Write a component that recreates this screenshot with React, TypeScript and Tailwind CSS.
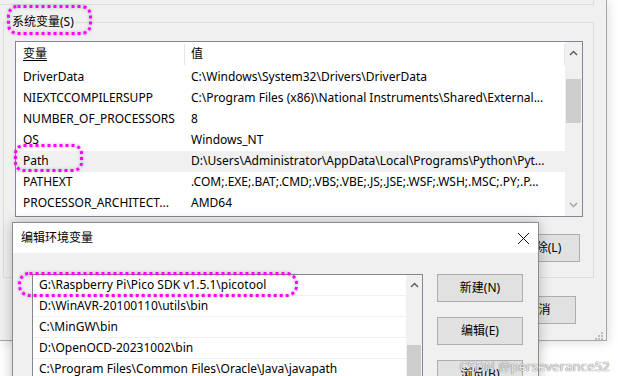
import React from "react";

const FONT = '"Noto Sans", "Noto Sans CJK SC", sans-serif';

const SYS_VARS = [
  { name: "DriverData", value: "C:\\Windows\\System32\\Drivers\\DriverData" },
  { name: "NIEXTCCOMPILERSUPP", value: "C:\\Program Files (x86)\\National Instruments\\Shared\\External..." },
  { name: "NUMBER_OF_PROCESSORS", value: "8" },
  { name: "OS", value: "Windows_NT" },
  { name: "Path", value: "D:\\Users\\Administrator\\AppData\\Local\\Programs\\Python\\Pyt...", hot: true },
  { name: "PATHEXT", value: ".COM;.EXE;.BAT;.CMD;.VBS;.VBE;.JS;.JSE;.WSF;.WSH;.MSC;.PY;.P..." },
  { name: "PROCESSOR_ARCHITECT...", value: "AMD64" },
];

const PATH_ITEMS = [
  "G:\\Raspberry Pi\\Pico SDK v1.5.1\\picotool",
  "D:\\WinAVR-20100110\\utils\\bin",
  "C:\\MinGW\\bin",
  "D:\\OpenOCD-20231002\\bin",
  "C:\\Program Files\\Common Files\\Oracle\\Java\\javapath",
];

function Chevron({ up, color }: { up?: boolean; color: string }) {
  return (
    <svg width="9" height="6" viewBox="0 0 9 6">
      <polyline
        points={up ? "1,5 4.5,1.5 8,5" : "1,1 4.5,4.5 8,1"}
        fill="none"
        stroke={color}
        strokeWidth="1.5"
      />
    </svg>
  );
}

function WinButton({ label, className = "" }: { label: string; className?: string }) {
  return (
    <div
      className={`flex items-center justify-center border border-[#adadad] bg-[#e1e1e1] text-[12px] text-black ${className}`}
    >
      {label}
    </div>
  );
}

function SystemVarList() {
  return (
    <div className="ml-[11px] mt-[18px] flex h-[176px] w-[568px] border border-[#828790] bg-white">
      <div className="flex flex-1 flex-col overflow-hidden">
        {/* header */}
        <div className="flex h-[25px] shrink-0 items-center">
          <div className="flex h-full w-[168px] items-center pl-[7px] underline underline-offset-2">变量</div>
          <div className="h-[21px] w-px bg-[#e5e5e5]" />
          <div className="flex h-full flex-1 items-center pl-[6px]">值</div>
          <div className="h-[21px] w-px bg-[#e5e5e5]" />
        </div>
        {SYS_VARS.map((v) => (
          <div
            key={v.name}
            className={`flex h-[21px] shrink-0 items-center whitespace-nowrap ${v.hot ? "bg-[#f0f0f0]" : ""}`}
          >
            <div className="w-[169px] overflow-hidden pl-[7px]">{v.name}</div>
            <div className="flex-1 overflow-hidden pl-[6px]">{v.value}</div>
          </div>
        ))}
      </div>
      {/* scrollbar */}
      <div className="flex w-[17px] flex-col bg-[#f0f0f0]">
        <div className="flex h-[20px] items-center justify-center pt-[2px]">
          <Chevron up color="#606060" />
        </div>
        <div className="h-[17px]" />
        <div className="mx-[1px] h-[44px] bg-[#cdcdcd]" />
        <div className="flex-1" />
        <div className="flex h-[20px] items-center justify-center pb-[2px]">
          <Chevron color="#a3a3a3" />
        </div>
      </div>
    </div>
  );
}

function EditDialog() {
  return (
    <div className="absolute left-[12px] top-[222px] flex h-[170px] w-[527px] flex-col border border-[#8c8c8c] bg-[#f0f0f0] shadow-[0_0_12px_rgba(0,0,0,0.25)]">
      <div className="flex h-[30px] shrink-0 items-center justify-between bg-white pl-[8px] pr-[8px]">
        <span>编辑环境变量</span>
        <svg width="13" height="13" viewBox="0 0 13 13">
          <path d="M1 1 L12 12 M12 1 L1 12" stroke="#111" strokeWidth="1" />
        </svg>
      </div>
      <div className="flex pl-[19px] pt-[21px]">
        {/* list */}
        <div className="flex h-[120px] w-[391px] border border-[#828790] bg-white">
          <div className="flex flex-1 flex-col">
            {PATH_ITEMS.map((p) => (
              <div
                key={p}
                className="flex h-[21px] shrink-0 items-center whitespace-nowrap border-b border-[#f0f0f0] pl-[6px]"
              >
                {p}
              </div>
            ))}
          </div>
          <div className="flex w-[16px] flex-col bg-[#f0f0f0]">
            <div className="flex h-[18px] items-center justify-center pt-[2px]">
              <Chevron up color="#606060" />
            </div>
            <div className="h-[52px]" />
            <div className="mx-[1px] flex-1 bg-[#cdcdcd]" />
          </div>
        </div>
        {/* buttons */}
        <div className="ml-[14px] flex flex-col gap-[15px]">
          <WinButton label="新建(N)" className="h-[28px] w-[86px]" />
          <WinButton label="编辑(E)" className="h-[28px] w-[86px]" />
          <WinButton label="浏览(B)" className="h-[28px] w-[86px]" />
        </div>
      </div>
    </div>
  );
}

export default function App() {
  return (
    <div
      className="relative h-[376px] w-[618px] overflow-hidden bg-white text-[12px] text-black"
      style={{ fontFamily: FONT }}
    >
      {/* Environment variables window */}
      <div className="absolute left-0 top-0 flex h-[341px] w-[607px] flex-col border-b border-r border-[#a6a6a6] bg-[#f0f0f0] shadow-[2px_2px_10px_rgba(0,0,0,0.12)]">
        <div className="h-[5px] w-[594px] border-b border-r border-[#dcdcdc]" />
        <div className="relative ml-[3px] mt-[17px] flex h-[257px] w-[591px] flex-col border border-[#dcdcdc]">
          <div className="absolute left-[7px] top-[-10px] bg-[#f0f0f0] px-px leading-[18px]">系统变量(S)</div>
          <SystemVarList />
          <div className="mr-[13px] mt-[17px] flex justify-end gap-[10px]">
            <WinButton label="新建(W)..." className="h-[28px] w-[75px]" />
            <WinButton label="编辑(I)..." className="h-[28px] w-[75px]" />
            <WinButton label="删除(L)" className="h-[28px] w-[75px]" />
          </div>
        </div>
        <div className="mr-[30px] mt-[18px] flex justify-end gap-[10px]">
          <WinButton label="确定" className="h-[28px] w-[75px]" />
          <WinButton label="取消" className="h-[28px] w-[75px]" />
        </div>
        <div className="mr-[3px] mt-[8px] flex justify-end">
          <svg width="8" height="8" viewBox="0 0 8 8">
            <rect x="6" y="0" width="2" height="2" fill="#bcbcbc" />
            <rect x="3" y="3" width="2" height="2" fill="#bcbcbc" />
            <rect x="6" y="3" width="2" height="2" fill="#bcbcbc" />
            <rect x="0" y="6" width="2" height="2" fill="#bcbcbc" />
            <rect x="3" y="6" width="2" height="2" fill="#bcbcbc" />
            <rect x="6" y="6" width="2" height="2" fill="#bcbcbc" />
          </svg>
        </div>
      </div>

      <EditDialog />

      {/* magenta annotation marks */}
      <svg className="pointer-events-none absolute left-0 top-0" width="618" height="376">
        <defs>
          <filter id="glow" x="-10%" y="-30%" width="120%" height="160%">
            <feDropShadow dx="0" dy="0" stdDeviation="1.5" floodColor="#000" floodOpacity="0.35" />
          </filter>
        </defs>
        <g fill="none" stroke="#ff00ff" strokeWidth="3" strokeDasharray="3 3" filter="url(#glow)">
          <rect x="8.5" y="6.5" width="82" height="27" rx="9" />
          <rect x="15.5" y="145.5" width="66" height="25" rx="8" />
          <rect x="19.5" y="273.5" width="277" height="22" rx="10" />
        </g>
      </svg>

      {/* watermark */}
      <div className="absolute right-[8px] top-[357px] text-[13px] tracking-[0.2px] text-[#ececec] [text-shadow:0_0_1px_#777,0_0_1px_#777]">
        CSDN @perseverance52
      </div>
    </div>
  );
}
